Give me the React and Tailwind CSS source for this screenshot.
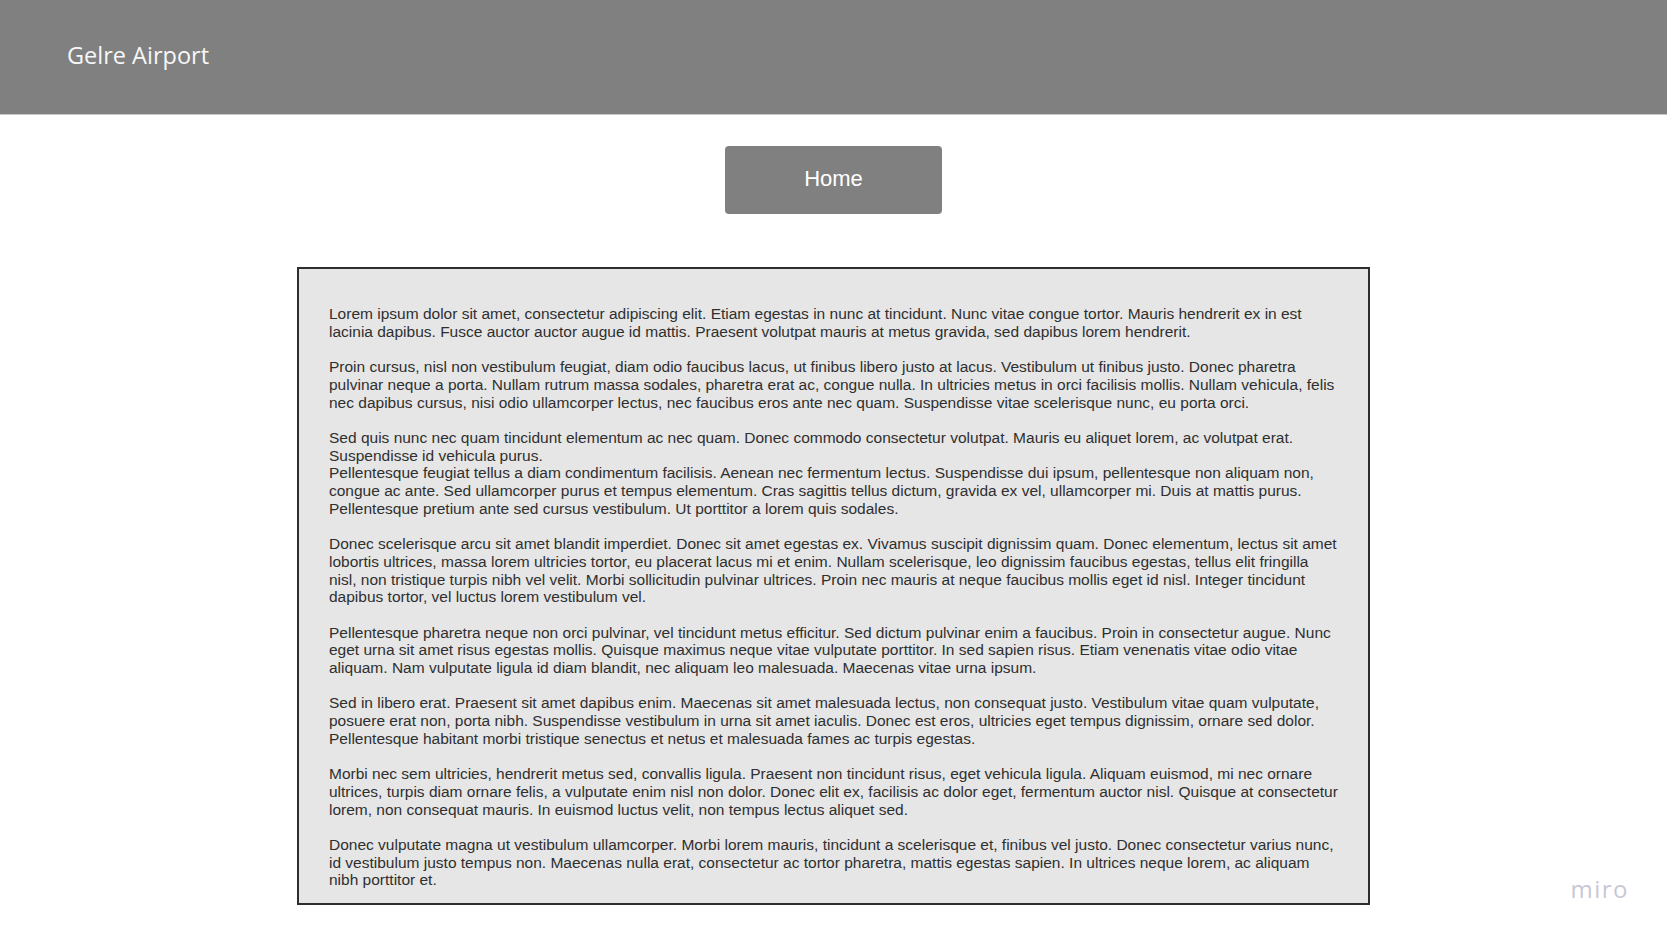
const paragraphs = [
  [
    "Lorem ipsum dolor sit amet, consectetur adipiscing elit. Etiam egestas in nunc at tincidunt. Nunc vitae congue tortor. Mauris hendrerit ex in est",
    "lacinia dapibus. Fusce auctor auctor augue id mattis. Praesent volutpat mauris at metus gravida, sed dapibus lorem hendrerit.",
  ],
  [
    "Proin cursus, nisl non vestibulum feugiat, diam odio faucibus lacus, ut finibus libero justo at lacus. Vestibulum ut finibus justo. Donec pharetra",
    "pulvinar neque a porta. Nullam rutrum massa sodales, pharetra erat ac, congue nulla. In ultricies metus in orci facilisis mollis. Nullam vehicula, felis",
    "nec dapibus cursus, nisi odio ullamcorper lectus, nec faucibus eros ante nec quam. Suspendisse vitae scelerisque nunc, eu porta orci.",
  ],
  [
    "Sed quis nunc nec quam tincidunt elementum ac nec quam. Donec commodo consectetur volutpat. Mauris eu aliquet lorem, ac volutpat erat.",
    "Suspendisse id vehicula purus.",
    "Pellentesque feugiat tellus a diam condimentum facilisis. Aenean nec fermentum lectus. Suspendisse dui ipsum, pellentesque non aliquam non,",
    "congue ac ante. Sed ullamcorper purus et tempus elementum. Cras sagittis tellus dictum, gravida ex vel, ullamcorper mi. Duis at mattis purus.",
    "Pellentesque pretium ante sed cursus vestibulum. Ut porttitor a lorem quis sodales.",
  ],
  [
    "Donec scelerisque arcu sit amet blandit imperdiet. Donec sit amet egestas ex. Vivamus suscipit dignissim quam. Donec elementum, lectus sit amet",
    "lobortis ultrices, massa lorem ultricies tortor, eu placerat lacus mi et enim. Nullam scelerisque, leo dignissim faucibus egestas, tellus elit fringilla",
    "nisl, non tristique turpis nibh vel velit. Morbi sollicitudin pulvinar ultrices. Proin nec mauris at neque faucibus mollis eget id nisl. Integer tincidunt",
    "dapibus tortor, vel luctus lorem vestibulum vel.",
  ],
  [
    "Pellentesque pharetra neque non orci pulvinar, vel tincidunt metus efficitur. Sed dictum pulvinar enim a faucibus. Proin in consectetur augue. Nunc",
    "eget urna sit amet risus egestas mollis. Quisque maximus neque vitae vulputate porttitor. In sed sapien risus. Etiam venenatis vitae odio vitae",
    "aliquam. Nam vulputate ligula id diam blandit, nec aliquam leo malesuada. Maecenas vitae urna ipsum.",
  ],
  [
    "Sed in libero erat. Praesent sit amet dapibus enim. Maecenas sit amet malesuada lectus, non consequat justo. Vestibulum vitae quam vulputate,",
    "posuere erat non, porta nibh. Suspendisse vestibulum in urna sit amet iaculis. Donec est eros, ultricies eget tempus dignissim, ornare sed dolor.",
    "Pellentesque habitant morbi tristique senectus et netus et malesuada fames ac turpis egestas.",
  ],
  [
    "Morbi nec sem ultricies, hendrerit metus sed, convallis ligula. Praesent non tincidunt risus, eget vehicula ligula. Aliquam euismod, mi nec ornare",
    "ultrices, turpis diam ornare felis, a vulputate enim nisl non dolor. Donec elit ex, facilisis ac dolor eget, fermentum auctor nisl. Quisque at consectetur",
    "lorem, non consequat mauris. In euismod luctus velit, non tempus lectus aliquet sed.",
  ],
  [
    "Donec vulputate magna ut vestibulum ullamcorper. Morbi lorem mauris, tincidunt a scelerisque et, finibus vel justo. Donec consectetur varius nunc,",
    "id vestibulum justo tempus non. Maecenas nulla erat, consectetur ac tortor pharetra, mattis egestas sapien. In ultrices neque lorem, ac aliquam",
    "nibh porttitor et.",
  ],
];

export default function App() {
  return (
    <div className="relative min-h-[937px] w-full bg-white font-['Liberation_Sans',Arial,sans-serif]">
      {/* Top bar */}
      <header className="flex h-[115px] items-center border-b border-[#c8c8c8] bg-[#808080] pl-[67px]">
        <h1 className="pb-[2px] font-['Open_Sans','Noto_Sans',sans-serif] text-[23.5px] text-[#f7f7f7]">
          Gelre Airport
        </h1>
      </header>

      {/* Nav button */}
      <div className="mt-[31px] flex justify-center">
        <button className="flex h-[68px] w-[217px] items-center justify-center rounded-[4px] bg-[#808080] pb-[3px] text-[22px] text-white">
          Home
        </button>
      </div>

      {/* Content box */}
      <main className="mx-auto mt-[53px] h-[638px] w-[1073px] border-2 border-[#2e2e2e] bg-[#e6e6e6] pl-[30px] pt-[36px] text-[15.5px] leading-[17.7px] text-[#2f2f2f]">
        {paragraphs.map((lines, i) => (
          <p key={i} className="mb-[17.7px]">
            {lines.map((line, j) => (
              <span key={j} className="block whitespace-nowrap">
                {line}
              </span>
            ))}
          </p>
        ))}
      </main>

      {/* Watermark */}
      <div className="absolute bottom-[36px] right-[38px] font-['Open_Sans','Noto_Sans',sans-serif] text-[24px] font-normal leading-none tracking-[1.5px] text-[#c9c7d6]">
        miro
      </div>
    </div>
  );
}
